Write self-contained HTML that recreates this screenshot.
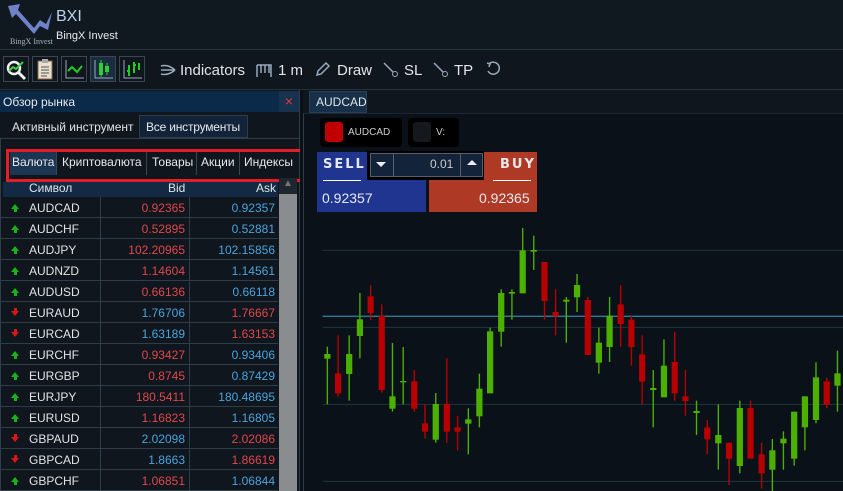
<!DOCTYPE html>
<html><head><meta charset="utf-8"><style>
*{margin:0;padding:0;box-sizing:border-box}
body{width:843px;height:491px;overflow:hidden;background:#0f161d;font-family:"Liberation Sans","Noto Sans CJK SC",sans-serif;color:#e6e9ec;position:relative}
.a{position:absolute;white-space:nowrap}
.ib{position:absolute;top:56px;width:26px;height:26px;border:1px solid #3a4652;background:#0f161d}
.tb{position:absolute;top:62px;font-size:15px;color:#dfe4e8}
.row{position:absolute;left:1px;width:277px;height:21px;border-bottom:1px solid #2f3d48;font-size:12px;background:#0f161d}
.row span{position:absolute;top:4px}
.sym{left:28px;color:#e0e3e6}
.bid{right:93px}
.ask{right:3px}
.r{color:#e0474c}.b{color:#4aa3df}
.up,.dn{position:absolute;left:10px;top:7px;width:0;height:0;border-left:4px solid transparent;border-right:4px solid transparent}
.up{border-bottom:5px solid #18b318}
.up:after{content:"";position:absolute;left:-1.5px;top:5px;width:3px;height:3px;background:#18b318}
.dn{top:9px;border-top:5px solid #d81818}
.dn:before{content:"";position:absolute;left:-1.5px;top:-8px;width:3px;height:3px;background:#d81818}
.cs{position:absolute;top:0;height:21px;width:1px;background:#2f3d48}
</style></head><body>
<div class="a" style="left:0;top:0;width:843px;height:50px;background:#111920;border-bottom:1px solid #26313b"></div>
<svg class="a" style="left:6px;top:2px" width="48" height="34" viewBox="0 0 48 34"><path d="M2 4 L14 2 L12 8 L28 26 L34 18 L40 22 L46 10 L42 28 L34 24 L28 32 L10 12 L6 16 Z" fill="#6f82c8"/></svg>
<div class="a" style="left:10px;top:37px;font-size:8px;font-family:'Liberation Serif',serif;color:#aab0c0">BingX Invest</div>
<div class="a" style="left:56px;top:8px;font-size:16px;color:#b9d3ec">BXI</div>
<div class="a" style="left:56px;top:30px;font-size:11px;color:#e8ecf0">BingX Invest</div>
<div class="ib" style="left:3px"><svg width="24" height="24"><circle cx="10" cy="11" r="6" stroke="#eee" stroke-width="2.5" fill="none"/><path d="M14 15 L21 22" stroke="#eee" stroke-width="3"/><path d="M5 14 L9 10 L12 12 L19 5" stroke="#4c4" stroke-width="2" fill="none"/></svg></div>
<div class="ib" style="left:32px"><svg width="24" height="24"><rect x="5" y="4" width="14" height="18" fill="#e8e0d0" stroke="#864" stroke-width="1"/><rect x="9" y="2" width="6" height="4" fill="#aaa"/><path d="M8 10h8M8 13h8M8 16h8M8 19h6" stroke="#555"/></svg></div>
<div class="ib" style="left:61px"><svg width="24" height="24"><path d="M4 3V21H22" stroke="#9ab" fill="none"/><path d="M6 14 L10 10 L15 15 L20 9" stroke="#2c2" stroke-width="2" fill="none"/></svg></div>
<div class="ib" style="left:90px;background:#1a2c40"><svg width="24" height="24"><path d="M4 3V21H22" stroke="#9ab" fill="none"/><rect x="8" y="6" width="4" height="12" fill="#3c3"/><path d="M10 3V20M16 6V18" stroke="#3c3"/><rect x="14" y="9" width="4" height="6" fill="#3c3"/></svg></div>
<div class="ib" style="left:119px"><svg width="24" height="24"><path d="M4 3V21H22" stroke="#9ab" fill="none"/><path d="M9 8V19M7 14H9M14 5V16M14 8H16M19 6V13" stroke="#2c2" stroke-width="2"/></svg></div>
<svg class="a" style="left:160px;top:62px" width="16" height="16"><path d="M1 4 Q8 2 15 8 M1 12 Q8 14 15 8 M1 8 H15" stroke="#9ab" stroke-width="1.5" fill="none"/></svg>
<div class="tb" style="left:180px">Indicators</div>
<svg class="a" style="left:256px;top:63px" width="16" height="14"><path d="M1 2H15V14M1 2V14M5 2V10M9 2V10M13 2V10" stroke="#9ab" stroke-width="1.5" fill="none"/></svg>
<div class="tb" style="left:278px">1 m</div>
<svg class="a" style="left:315px;top:61px" width="16" height="16"><path d="M2 14 L3 10 L11 2 L14 5 L6 13 Z" stroke="#9ab" stroke-width="1.5" fill="none"/></svg>
<div class="tb" style="left:337px">Draw</div>
<svg class="a" style="left:383px;top:62px" width="16" height="16"><path d="M1 1 L10 10" stroke="#9ab" stroke-width="1.5"/><circle cx="12" cy="12" r="2.5" stroke="#9ab" fill="none"/></svg>
<div class="tb" style="left:404px">SL</div>
<svg class="a" style="left:433px;top:62px" width="16" height="16"><path d="M1 1 L10 10" stroke="#9ab" stroke-width="1.5"/><circle cx="12" cy="12" r="2.5" stroke="#9ab" fill="none"/></svg>
<div class="tb" style="left:454px">TP</div>
<svg class="a" style="left:485px;top:61px" width="16" height="16"><path d="M4 3 A6 6 0 1 1 3 10" stroke="#9ab" stroke-width="1.5" fill="none"/><path d="M2 2 L5 3 L4 6" stroke="#9ab" stroke-width="1.5" fill="none"/></svg>
<div class="a" style="left:0;top:89px;width:843px;height:1px;background:#26313b"></div>
<div class="a" style="left:0;top:90px;width:300px;height:401px;background:#0f161d;border-right:1px solid #2f3d48"></div>
<div class="a" style="left:0;top:91px;width:279px;height:21px;background:#0b2a4a;font-size:12px;padding:4px 3px">Обзор рынка</div>
<div class="a" style="left:279px;top:91px;width:20px;height:21px;background:#17324e;color:#e33;font-size:14px;text-align:center;line-height:20px">×</div>
<div class="a" style="left:12px;top:120px;font-size:12px;color:#dfe4e8">Активный инструмент</div>
<div class="a" style="left:139px;top:115px;width:109px;height:23px;background:#13243a;border:1px solid #2f3d48;font-size:12px;padding:4px 0 0 6px;letter-spacing:-0.2px">Все инструменты</div>
<div class="a" style="left:0;top:138px;width:300px;height:353px;border:1px solid #2f3d48;border-bottom:none"></div>
<div class="a" style="left:10px;top:152px;width:46px;height:23px;background:#1b3552"></div>
<div class="a" style="left:12px;top:155px;font-size:12px">Валюта</div>
<div class="a" style="left:56px;top:152px;width:1px;height:23px;background:#3a4652"></div>
<div class="a" style="left:62px;top:155px;font-size:12px">Криптовалюта</div>
<div class="a" style="left:146px;top:152px;width:1px;height:23px;background:#3a4652"></div>
<div class="a" style="left:152px;top:155px;font-size:12px">Товары</div>
<div class="a" style="left:196px;top:152px;width:1px;height:23px;background:#3a4652"></div>
<div class="a" style="left:201px;top:155px;font-size:12px">Акции</div>
<div class="a" style="left:239px;top:152px;width:1px;height:23px;background:#3a4652"></div>
<div class="a" style="left:244px;top:155px;font-size:12px">Индексы</div>
<div class="a" style="left:6px;top:149px;width:298px;height:33px;border:3px solid #e51d26"></div>
<div class="a" style="left:3px;top:182px;width:275px;height:16px;background:#142a44"></div>
<div class="a" style="left:29px;top:181px;font-size:12px;color:#dfe4e8">Символ</div>
<div class="a" style="left:168px;top:181px;font-size:12px;color:#dfe4e8">Bid</div>
<div class="a" style="left:256px;top:181px;font-size:12px;color:#dfe4e8">Ask</div>
<div class="a" style="left:279px;top:178px;width:18px;height:313px;background:#8a8d90"></div>
<div class="a" style="left:279px;top:178px;width:18px;height:16px;background:#1e2730;color:#777;font-size:10px;text-align:center">▲</div>
<div class="a" style="left:300px;top:90px;width:3px;height:401px;background:#0a1016"></div>
<div id="rows"></div>
<script>
var d=[["up","AUDCAD","0.92365","0.92357"],["up","AUDCHF","0.52895","0.52881"],["up","AUDJPY","102.20965","102.15856"],["up","AUDNZD","1.14604","1.14561"],["up","AUDUSD","0.66136","0.66118"],["dn","EURAUD","1.76706","1.76667"],["dn","EURCAD","1.63189","1.63153"],["up","EURCHF","0.93427","0.93406"],["up","EURGBP","0.8745","0.87429"],["up","EURJPY","180.5411","180.48695"],["up","EURUSD","1.16823","1.16805"],["dn","GBPAUD","2.02098","2.02086"],["dn","GBPCAD","1.8663","1.86619"],["up","GBPCHF","1.06851","1.06844"]];
var h="";d.forEach(function(r,i){var u=r[0]=="up";h+='<div class="row" style="top:'+(197+21*i)+'px"><i class="'+r[0]+'"></i><span class="sym">'+r[1]+'</span><div class="cs" style="left:99px"></div><div class="cs" style="left:188px"></div><span class="bid '+(u?"r":"b")+'">'+r[2]+'</span><span class="ask '+(u?"b":"r")+'">'+r[3]+'</span></div>'});
document.getElementById("rows").innerHTML=h;
</script>
<div class="a" style="left:309px;top:91px;width:58px;height:22px;background:#16304a;border:1px solid #2a4058;font-size:12px;padding:3px 6px;color:#dfe4e8">AUDCAD</div>
<div class="a" style="left:303px;top:113px;width:540px;height:378px;background:#0a1118;border-left:1px solid #2f3d48;border-top:1px solid #1d2630"></div>
<svg class="a" style="left:300px;top:210px" width="543" height="281" viewBox="0 0 1568 843" preserveAspectRatio="none">
<g stroke="#1c3540" stroke-width="3"><path d="M65 121H1568M65 352H1568M65 583H1568M65 814H1568"/></g>
<path d="M65 319H1568" stroke="#2f7a92" stroke-width="4"/>
<g id="c"></g></svg>
<script>
var c=[[79,410,583,432,446,1],[110,376,560,490,550,0],[142,376,572,432,492,1],[173,249,445,328,378,1],[204,226,330,259,309,0],[236,283,548,318,540,0],[267,399,605,559,596,1],[298,411,583,513,517,1],[330,480,605,514,596,0],[361,583,686,640,665,0],[392,549,698,582,689,1],[424,445,698,582,665,0],[455,618,721,652,665,0],[486,595,733,628,641,1],[518,491,652,536,619,1],[549,353,550,364,550,1],[581,238,410,249,365,1],[612,238,329,246,251,1],[643,54,250,121,250,1],[675,77,180,120,125,1],[706,156,329,156,273,0],[738,238,376,306,319,0],[769,261,398,269,275,1],[800,192,306,225,262,1],[831,261,435,270,435,0],[863,353,491,398,458,1],[894,261,456,317,411,1],[926,226,410,283,342,0],[957,318,467,329,411,0],[988,376,583,433,515,0],[1020,480,652,534,540,1],[1051,388,562,467,562,1],[1082,365,572,456,550,0],[1113,480,617,559,573,0],[1145,572,675,603,609,1],[1176,630,733,652,688,0],[1208,583,779,675,700,1],[1239,698,825,698,746,0],[1270,572,790,594,768,1],[1301,572,746,594,746,0],[1333,698,836,733,790,0],[1364,687,843,721,779,1],[1396,664,779,686,700,1],[1427,605,767,605,746,1],[1458,559,721,559,652,1],[1490,457,640,502,630,1],[1521,503,595,514,584,0],[1552,422,605,490,527,1]];
var s="";c.forEach(function(k){var col=k[5]?"#4cb000":"#b80000";s+='<line x1="'+k[0]+'" x2="'+k[0]+'" y1="'+k[1]+'" y2="'+k[2]+'" stroke="'+col+'" stroke-width="4"/><rect x="'+(k[0]-9)+'" y="'+k[3]+'" width="18" height="'+(k[4]-k[3])+'" fill="'+col+'"/>'});
document.getElementById("c").innerHTML=s;
</script>
<div class="a" style="left:320px;top:118px;width:82px;height:29px;background:#000;border-radius:4px"></div>
<div class="a" style="left:325px;top:122px;width:18px;height:20px;background:#c00000;border-radius:3px"></div>
<div class="a" style="left:348px;top:127px;font-size:10px;color:#ccc">AUDCAD</div>
<div class="a" style="left:408px;top:118px;width:51px;height:29px;background:#000;border-radius:4px"></div>
<div class="a" style="left:413px;top:122px;width:18px;height:20px;background:#15181c;border-radius:3px"></div>
<div class="a" style="left:436px;top:127px;font-size:10px;color:#ccc">V:</div>
<div class="a" style="left:317px;top:152px;width:109px;height:60px;background:#1f3590"></div>
<div class="a" style="left:429px;top:152px;width:108px;height:60px;background:#ae3a25"></div>
<div class="a" style="left:323px;top:157px;font-size:13px;font-weight:bold;letter-spacing:2px;font-family:'DejaVu Sans',sans-serif">SELL</div>
<div class="a" style="left:323px;top:180px;width:38px;height:1px;background:#fff"></div>
<div class="a" style="left:500px;top:157px;font-size:13px;font-weight:bold;letter-spacing:2px;font-family:'DejaVu Sans',sans-serif">BUY</div>
<div class="a" style="left:493px;top:180px;width:38px;height:1px;background:#fff"></div>
<div class="a" style="left:322px;top:190px;font-size:14px">0.92357</div>
<div class="a" style="left:479px;top:190px;font-size:14px">0.92365</div>
<div class="a" style="left:367px;top:151px;width:117px;height:29px;background:#000"></div>
<div class="a" style="left:370px;top:153px;width:113px;height:24px;background:#13243a;border:1px solid #55606a"></div>
<div class="a" style="left:393px;top:153px;width:1px;height:24px;background:#55606a"></div>
<div class="a" style="left:460px;top:153px;width:1px;height:24px;background:#55606a"></div>
<div class="a" style="left:376px;top:162px;border-left:5px solid transparent;border-right:5px solid transparent;border-top:5px solid #eee"></div>
<div class="a" style="left:467px;top:160px;border-left:5px solid transparent;border-right:5px solid transparent;border-bottom:5px solid #eee"></div>
<div class="a" style="left:430px;top:157px;font-size:12px;color:#ccc">0.01</div>
</body></html>
